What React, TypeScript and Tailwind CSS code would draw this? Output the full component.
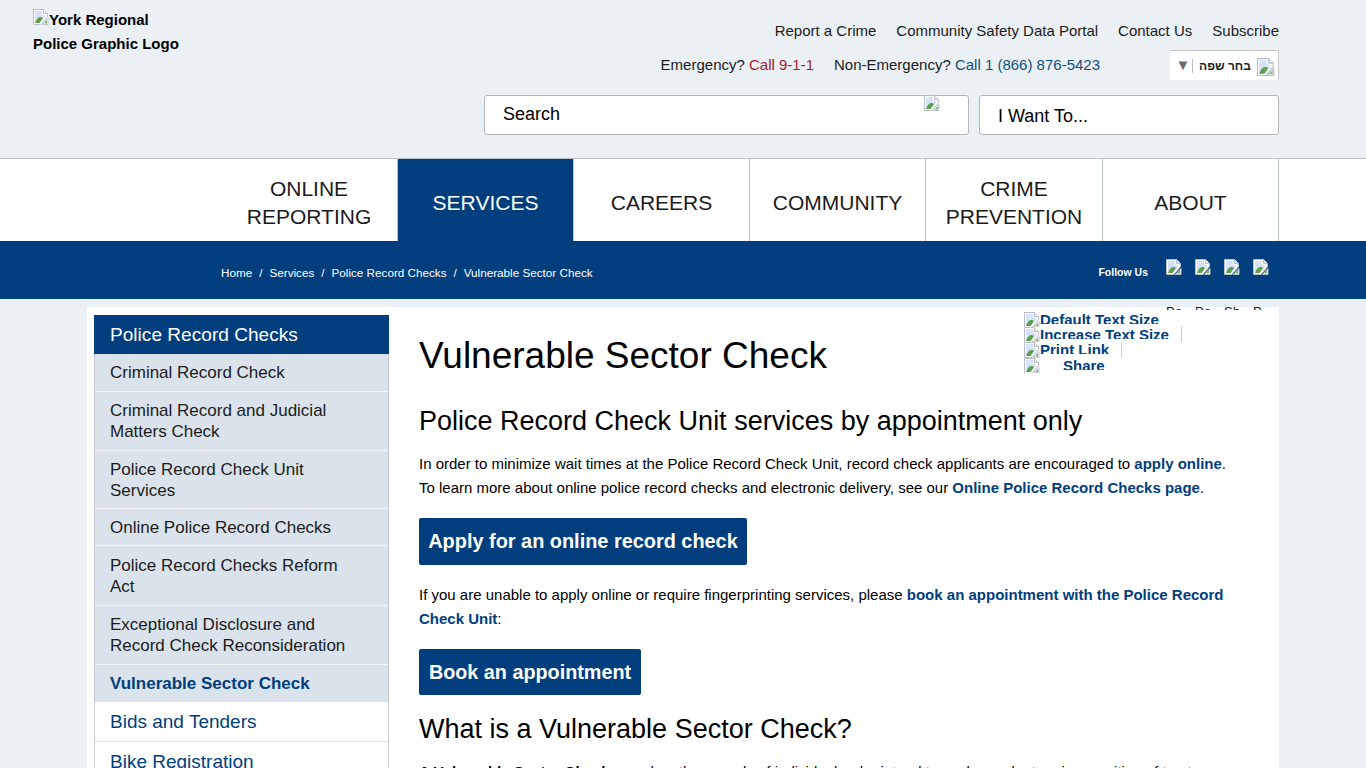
const BrokenImage = ({ className = '' }: { className?: string }) => (
  <svg viewBox="0 0 16 16" width="16" height="16" className={`shrink-0 ${className}`}>
    <path d="M.5.500h10l4 4v3l-6.500 8H.5z" fill="#fff" stroke="#b9bec8" />
    <path d="M10.500.500v4h4" fill="#eceef5" stroke="#b9bec8" />
    <path d="M2 2h7v4h3v2l-5 6H2z" fill="#d5e2f8" />
    <path d="M2 14c1-3 3-6 5-6 1.500 0 2.500.500 3 1l-3.500 5z" fill="#5f9e4b" />
    <path d="M15 9.500v6H9.500z" fill="#fff" stroke="#b9bec8" />
    <path d="M14 11v3.500h-3z" fill="#79b565" />
  </svg>
)

const sideItems = [
  { label: 'Criminal Record Check', h: 'h-[38px]' },
  { label: 'Criminal Record and Judicial Matters Check', h: 'h-[59px]' },
  { label: 'Police Record Check Unit Services', h: 'h-[58px]' },
  { label: 'Online Police Record Checks', h: 'h-[37px]' },
  { label: 'Police Record Checks Reform Act', h: 'h-[60px]' },
  { label: 'Exceptional Disclosure and Record Check Reconsideration', h: 'h-[59px]' },
]

const navItems = [
  { lines: ['ONLINE', 'REPORTING'], w: 'w-[177px]' },
  { lines: ['SERVICES'], w: 'w-[176px]' },
  { lines: ['CAREERS'], w: 'w-[176px]' },
  { lines: ['COMMUNITY'], w: 'w-[176px]' },
  { lines: ['CRIME', 'PREVENTION'], w: 'w-[177px]' },
  { lines: ['ABOUT'], w: 'w-[176px]' },
]

function Header() {
  return (
    <header className="h-[159px] border-b border-[#bcc1c6] bg-[#ebf0f5] flex justify-between pl-[33px] pr-[87px]">
      <div className="pt-[8px] w-[160px] text-[15px] leading-[24px] font-bold text-black">
        <BrokenImage className="inline-block align-baseline" />
        York Regional Police Graphic Logo
      </div>
      <div className="flex flex-col items-end">
        <div className="flex gap-[20px] pt-[21px] text-[15px] leading-[20px] text-[#1b1b1b]">
          <span>Report a Crime</span>
          <span>Community Safety Data Portal</span>
          <span>Contact Us</span>
          <span>Subscribe</span>
        </div>
        <div className="flex items-center h-[30px] mt-[9px] text-[15px]">
          <span className="mt-[1px] text-[#1b1b1b]">
            Emergency? <span className="text-[#a6192e]">Call 9-1-1</span>
          </span>
          <span className="mt-[1px] ml-[20px] text-[#1b1b1b]">
            Non-Emergency? <span className="text-[#0f4f80]">Call 1 (866) 876-5423</span>
          </span>
          <div className="ml-[70px] w-[109px] h-[30px] bg-white border-t border-r border-[#c8c8c8] flex items-center pl-[5px] pr-[3px]">
            <span className="text-[#6b6b6b] text-[15px] w-[16px] text-center">▼</span>
            <span className="h-[14px] border-l border-[#bbbbbb] ml-[1px]" />
            <span className="flex-1 text-center text-[12px] font-bold text-[#222222]" dir="rtl">
              בחר שפה
            </span>
            <BrokenImage className="mt-[2px] w-[18px] h-[18px]" />
          </div>
        </div>
        <div className="flex gap-[10px] mt-[15px]">
          <div className="w-[485px] h-[40px] bg-white border border-[#b5b5b5] rounded-[3px] flex justify-between pl-[18px] pr-[28px] text-[18px] leading-[36px] text-black">
            <span>Search</span>
            <BrokenImage className="mt-[-1px]" />
          </div>
          <div className="w-[300px] h-[40px] bg-white border border-[#b5b5b5] rounded-[3px] pl-[18px] text-[18px] leading-[40px] text-black">
            I Want To...
          </div>
        </div>
      </div>
    </header>
  )
}

function Nav() {
  return (
    <nav className="h-[82px] bg-white flex justify-end pr-[87px]">
      {navItems.map((item, i) => (
        <div
          key={item.lines[0]}
          className={`${item.w} pt-[6px] flex flex-col items-center justify-center border-r border-[#bcc1c6] text-[21px] leading-[28px] ${
            i === 1 ? 'bg-[#003e7e] text-white' : 'text-[#1b1b1b]'
          }`}
        >
          {item.lines.map((l) => (
            <span key={l}>{l}</span>
          ))}
        </div>
      ))}
    </nav>
  )
}

function Breadcrumb() {
  return (
    <div className="relative z-10 h-[58px] bg-[#003e7e] flex items-center justify-between pl-[221px] pr-[87px] text-white text-[11.700px]">
      <div className="flex gap-[7px] mt-[5px]">
        <span>Home</span>
        <span>/</span>
        <span>Services</span>
        <span>/</span>
        <span>Police Record Checks</span>
        <span>/</span>
        <span>Vulnerable Sector Check</span>
      </div>
      <div className="flex items-start h-[58px] pt-[18px]">
        <span className="mt-[6px] mr-[18px] text-[10.500px] font-bold">Follow Us</span>
        <div className="flex gap-[13px] pr-[10px]">
          <BrokenImage />
          <BrokenImage />
          <BrokenImage />
          <BrokenImage />
        </div>
      </div>
      <div className="absolute top-[66px] right-[87px] w-[113px] h-[3px] overflow-hidden flex gap-[13px] text-[13px] leading-[10px] text-[#1b1b1b]">
        <span className="w-[16px]">Po</span>
        <span className="w-[16px]">Po</span>
        <span className="w-[16px]">Sh</span>
        <span className="w-[16px]">P</span>
      </div>
    </div>
  )
}

function Sidebar() {
  return (
    <aside className="w-[295px] shrink-0 border-x border-[#c6ccd2] self-start">
      <div className="h-[39px] mx-[-1px] bg-[#003e7e] text-white text-[19.100px] leading-[39px] pl-[16px]">
        Police Record Checks
      </div>
      {sideItems.map((item) => (
        <div
          key={item.label}
          className={`${item.h} bg-[#dae3ec] border-b border-[#f2f5f8] pl-[15px] pr-[40px] flex items-center text-[17px] leading-[21px] text-[#1b1b1b]`}
        >
          <span>{item.label}</span>
        </div>
      ))}
      <div className="h-[37px] bg-[#dae3ec] pl-[15px] flex items-center text-[17px] font-bold text-[#003e7e]">
        Vulnerable Sector Check
      </div>
      <div className="h-[40px] pt-[2px] border-b border-[#dfe3e7] pl-[15px] flex items-center text-[19px] text-[#003e7e]">
        Bids and Tenders
      </div>
      <div className="h-[40px] pt-[1px] pl-[15px] flex items-center text-[19px] text-[#003e7e]">Bike Registration</div>
    </aside>
  )
}

function PageTools() {
  const clip = 'block h-[12px] overflow-hidden whitespace-nowrap'
  return (
    <div className="absolute top-[5px] left-[937px] w-[160px] text-[15px] leading-[16px] font-bold text-[#003e7e]">
      <div className="h-[15px] overflow-hidden flex">
        <BrokenImage />
        <span className={clip}>Default Text Size</span>
      </div>
      <div className="h-[15px] overflow-hidden flex w-[158px] border-r border-[#c6ccd2]">
        <BrokenImage />
        <span className={clip}>Increase Text Size</span>
      </div>
      <div className="h-[16px] overflow-hidden flex w-[98px] border-r border-[#c6ccd2]">
        <BrokenImage />
        <span className={clip}>Print Link</span>
      </div>
      <div className="h-[15px] overflow-hidden flex">
        <BrokenImage />
        <span className={`${clip} ml-[23px]`}>Share</span>
      </div>
    </div>
  )
}

function Content() {
  const link = 'font-bold text-[#003e7e]'
  return (
    <div className="flex-1 pl-[30px] pr-[48px] text-black">
      <h1 className="text-[37px] leading-[40px] mt-[21px]">Vulnerable Sector Check</h1>
      <h2 className="text-[27px] leading-[32px] mt-[29px]">Police Record Check Unit services by appointment only</h2>
      <p className="text-[15px] leading-[24px] mt-[15px]">
        In order to minimize wait times at the Police Record Check Unit, record check applicants are encouraged to{' '}
        <span className={link}>apply online</span>. To learn more about online police record checks and electronic delivery,
        see our <span className={link}>Online Police Record Checks page</span>.
      </p>
      <div className="mt-[18px] w-[328px] h-[47px] bg-[#003e7e] rounded-[2px] text-white font-bold text-[19.900px] leading-[46px] text-center">
        Apply for an online record check
      </div>
      <p className="text-[15px] leading-[24px] mt-[18px]">
        If you are unable to apply online or require fingerprinting services, please{' '}
        <span className={link}>book an appointment with the Police Record Check Unit</span>:
      </p>
      <div className="mt-[18px] w-[222px] h-[46px] bg-[#003e7e] rounded-[2px] text-white font-bold text-[19.800px] leading-[46px] text-center">
        Book an appointment
      </div>
      <h2 className="text-[27px] leading-[32px] mt-[18px]">What is a Vulnerable Sector Check?</h2>
      <p className="text-[15px] leading-[24px] mt-[15px]">
        <b>A Vulnerable Sector Check</b> searches the records of individuals who intend to work or volunteer in a position
        of trust or authority over vulnerable persons.
      </p>
    </div>
  )
}

export default function App() {
  return (
    <div className="h-screen overflow-hidden bg-[#ebf0f5] font-['Liberation_Sans',Arial,sans-serif]">
      <Header />
      <Nav />
      <Breadcrumb />
      <main className="relative ml-[87px] w-[1192px] mt-[8px] bg-white pl-[7px] pt-[8px] flex">
        <Sidebar />
        <Content />
        <PageTools />
      </main>
    </div>
  )
}
